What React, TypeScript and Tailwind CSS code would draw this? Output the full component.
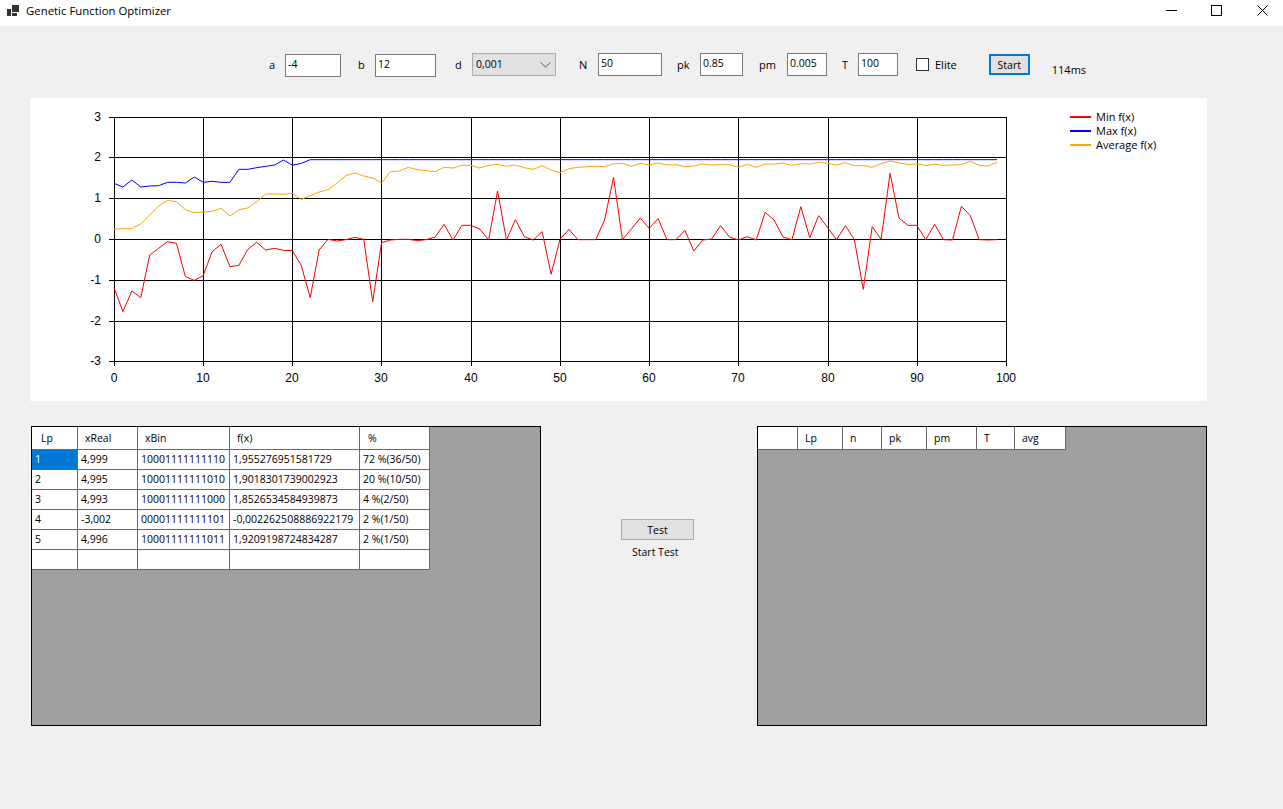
const minY = [548,620,558,578,450,430,410,415,515,526,512,440,418,485,481,433,412,435,430,436,437,482,578,435,403,408,404,397,403,590,413,405,403,403,407,404,396,358,405,361,361,372,405,258,405,344,395,405,380,508,403,373,404,404,404,345,217,404,372,339,370,341,404,404,376,438,405,402,362,396,405,395,405,322,345,396,404,305,398,332,368,404,362,404,553,365,403,205,339,361,361,404,358,404,405,304,332,404,405,404];
const maxHead = [235,246,225,246,243,242,232,232,234,216,232,229,232,232,193,193,188,184,180,165,181,175];
const maxY = Array.from({ length: 100 }, (_, i) => (i < maxHead.length ? maxHead[i] : 164));
const avgY = [373,371,371,357,330,303,286,290,314,323,321,319,310,333,314,309,290,267,267,268,265,283,272,261,254,234,212,204,213,219,234,200,198,187,194,197,200,187,189,181,181,189,181,178,184,180,188,193,182,195,203,191,187,185,184,185,176,175,184,175,180,174,180,179,185,183,177,180,179,179,187,178,187,177,177,174,181,176,177,172,175,180,173,182,182,187,176,168,174,178,177,182,178,181,180,179,169,181,183,172];

const points = (ys: number[]) =>
  ys.map((z, i) => `${(84 + i * 8.92).toFixed(2)},${(7 + z / 3).toFixed(2)}`).join(" ");

const gridX = [84, 173, 262, 351, 441, 530, 619, 708, 798, 887, 976];
const gridY = [19, 59, 100, 141, 182, 223, 263];

function Chart() {
  return (
    <svg width="1000" height="303" className="block shrink-0">
      <g stroke="#000" strokeWidth="1" shapeRendering="crispEdges">
        {gridX.map((x) => (
          <line key={x} x1={x + 0.5} x2={x + 0.5} y1={19} y2={268} />
        ))}
        {gridY.map((y) => (
          <line key={y} x1={79} x2={977} y1={y + 0.5} y2={y + 0.5} />
        ))}
      </g>
      <polyline points={points(minY)} fill="none" stroke="#ff0000" strokeWidth="1" />
      <polyline points={points(maxY)} fill="none" stroke="#0000ff" strokeWidth="1" />
      <polyline points={points(avgY)} fill="none" stroke="#ffa500" strokeWidth="1" />
      <g fontFamily="'Liberation Sans', sans-serif" fontSize="12" fill="#000">
        {[3, 2, 1, 0, -1, -2, -3].map((v, i) => (
          <text key={v} x="71" y={gridY[i] + 4} textAnchor="end">{v}</text>
        ))}
        {gridX.map((x, i) => (
          <text key={x} x={x} y="284" textAnchor="middle">{i * 10}</text>
        ))}
      </g>
    </svg>
  );
}

function Legend() {
  const rows = [
    ["Min f(x)", "bg-[#ff0000]"],
    ["Max f(x)", "bg-[#0000ff]"],
    ["Average f(x)", "bg-[#ffa500]"],
  ];
  return (
    <div className="ml-[40px] mt-[12px] flex flex-col">
      {rows.map(([t, c]) => (
        <div key={t} className="flex h-[14px] items-center">
          <div className={`h-[2px] w-[21px] ${c}`} />
          <span className="ml-[5px] text-[11px] leading-[14px]">{t}</span>
        </div>
      ))}
    </div>
  );
}

function Field({ label, labelW, value, w, mt }: { label: string; labelW: number; value: string; w: string; mt: string }) {
  return (
    <>
      <span style={{ width: labelW }} className="shrink-0 text-[11px] leading-[16px] mt-[4px]">{label}</span>
      <div className={`${w} ${mt} h-[23px] shrink-0 border border-[#7a7a7a] bg-white pl-[2px] text-[10.5px] leading-[19px]`}>{value}</div>
    </>
  );
}

function GridRow({ cells, widths, header, selected, pads }: { cells: string[]; widths: string[]; header?: boolean; selected?: boolean; pads?: string[] }) {
  return (
    <div className={`flex ${header ? "h-[23px]" : "h-[20px]"}`}>
      {cells.map((c, i) => (
        <div
          key={i}
          className={`${widths[i]} shrink-0 whitespace-nowrap border-b border-r border-[#696969] text-[10.5px] ${
            header ? `${pads ? pads[i] : "pl-[7px]"} leading-[22px]` : "pl-[3px] leading-[19px]"
          } ${selected && i === 0 ? "bg-[#0078d7] text-white" : "bg-white"}`}
        >
          {c}
        </div>
      ))}
    </div>
  );
}

const leftW = ["w-[46px]", "w-[60px]", "w-[92px]", "w-[130px]", "w-[70px]"];
const rightW = ["w-[40px]", "w-[45px]", "w-[39px]", "w-[45px]", "w-[50px]", "w-[38px]", "w-[51px]"];
const leftPads = ["pl-[9px]", "pl-[7px]", "pl-[7px]", "pl-[7px]", "pl-[8px]"];
const leftRows = [
  ["1", "4,999", "10001111111110", "1,955276951581729", "72 %(36/50)"],
  ["2", "4,995", "10001111111010", "1,9018301739002923", "20 %(10/50)"],
  ["3", "4,993", "10001111111000", "1,8526534584939873", "4 %(2/50)"],
  ["4", "-3,002", "00001111111101", "-0,002262508886922179", "2 %(1/50)"],
  ["5", "4,996", "10001111111011", "1,9209198724834287", "2 %(1/50)"],
  ["", "", "", "", ""],
];

export default function App() {
  return (
    <div className="h-[809px] w-[1283px] overflow-hidden bg-[#f0f0f0] text-black [font-family:'Open_Sans',sans-serif]">
      {/* title bar */}
      <div className="flex h-[26px] items-center bg-white">
        <svg width="12" height="11" viewBox="0 0 12 11" className="ml-[7px] mb-[6px] shrink-0" fill="#333">
          <rect x="0" y="4" width="4" height="7" />
          <rect x="5" y="0" width="7" height="7" />
          <rect x="5" y="8" width="5" height="3" />
        </svg>
        <span className="ml-[7px] mb-[4px] text-[11.4px]">Genetic Function Optimizer</span>
        <div className="ml-auto mb-[6px] flex items-center">
          <svg width="11" height="11" viewBox="0 0 11 11" className="shrink-0" stroke="#000" fill="none" shapeRendering="crispEdges">
            <line x1="0" x2="11" y1="5.5" y2="5.5" />
          </svg>
          <svg width="11" height="11" viewBox="0 0 11 11" className="ml-[34px] shrink-0" stroke="#000" fill="none" shapeRendering="crispEdges">
            <rect x="0.5" y="0.5" width="10" height="10" />
          </svg>
          <svg width="11" height="11" viewBox="0 0 11 11" className="ml-[35px] mr-[15px] shrink-0" stroke="#000" fill="none">
            <path d="M0.5 0.5 L10.5 10.5 M10.5 0.5 L0.5 10.5" />
          </svg>
        </div>
      </div>

      {/* toolbar */}
      <div className="flex h-[72px] items-start pl-[269px] pt-[27px]">
        <Field label="a" labelW={16} value="-4" w="w-[56px]" mt="mt-[1px]" />
        <span className="ml-[17px]" />
        <Field label="b" labelW={17} value="12" w="w-[61px]" mt="mt-[1px]" />
        <span className="ml-[19px] mt-[4px] w-[17px] shrink-0 text-[11px] leading-[16px]">d</span>
        <div className="flex h-[23px] w-[84px] shrink-0 items-center justify-between border border-[#adadad] bg-[#e1e1e1] pl-[3px] pr-[3px] pt-[1px] text-[10.5px]">
          <span>0,001</span>
          <svg width="11" height="6" viewBox="0 0 11 6" fill="none" stroke="#555" className="mr-[1px]">
            <path d="M0.5 0.5 L5.5 5 L10.5 0.5" />
          </svg>
        </div>
        <span className="ml-[23px]" />
        <Field label="N" labelW={19} value="50" w="w-[64px]" mt="" />
        <span className="ml-[15px]" />
        <Field label="pk" labelW={23} value="0.85" w="w-[43px]" mt="" />
        <span className="ml-[16px]" />
        <Field label="pm" labelW={28} value="0.005" w="w-[40px]" mt="" />
        <span className="ml-[15px]" />
        <Field label="T" labelW={16} value="100" w="w-[40px]" mt="" />
        <div className="ml-[18px] mt-[5px] h-[13px] w-[13px] shrink-0 border border-[#333] bg-white" />
        <span className="ml-[6px] mt-[4px] text-[11px] leading-[16px]">Elite</span>
        <div className="ml-[32px] mt-[1px] flex h-[21px] w-[41px] shrink-0 items-center justify-center border-2 border-[#0078d7] bg-[#e1e1e1] pt-[2px] text-[10.5px]">Start</div>
        <span className="ml-[22px] mt-[9px] text-[11px] leading-[16px]">114ms</span>
      </div>

      {/* chart */}
      <div className="ml-[30px] flex h-[303px] w-[1177px] bg-white">
        <Chart />
        <Legend />
      </div>

      {/* bottom */}
      <div className="ml-[31px] mt-[25px] flex items-start">
        <div className="h-[300px] w-[510px] shrink-0 border border-black bg-[#a0a0a0]">
          <GridRow header cells={["Lp", "xReal", "xBin", "f(x)", "%"]} widths={leftW} pads={leftPads} />
          {leftRows.map((r, i) => (
            <GridRow key={i} cells={r} widths={leftW} selected={i === 0} />
          ))}
        </div>
        <div className="ml-[80px] mt-[93px] flex w-[136px] shrink-0 flex-col">
          <div className="flex h-[21px] w-[73px] items-center justify-center border border-[#adadad] bg-[#e1e1e1] pt-[2px] text-[10.5px]">Test</div>
          <span className="ml-[11px] mt-[4px] text-[10.5px] leading-[16px]">Start Test</span>
        </div>
        <div className="h-[300px] w-[450px] shrink-0 border border-black bg-[#a0a0a0]">
          <GridRow header cells={["", "Lp", "n", "pk", "pm", "T", "avg"]} widths={rightW} />
        </div>
      </div>
    </div>
  );
}
